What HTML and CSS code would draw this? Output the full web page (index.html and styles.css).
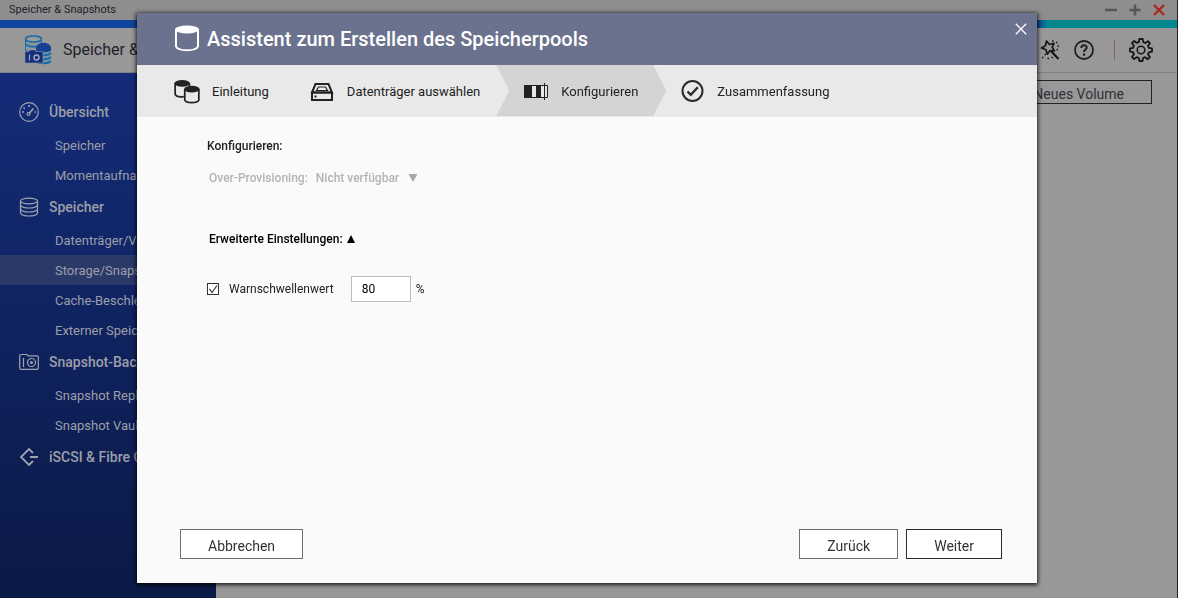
FILE: index.html
```html
<!DOCTYPE html>
<html lang="de">
<head>
<meta charset="utf-8">
<meta name="viewport" content="width=device-width, initial-scale=1">
<title>Speicher &amp; Snapshots</title>
<link rel="stylesheet" href="styles.css">
</head>
<body>
<div class="window">
  <div class="titlebar">
    <span class="titlebar-text">Speicher &amp; Snapshots</span>
    <div class="window-controls">
      <button class="icon-button" aria-label="Minimieren"><svg width="12" height="12" viewBox="0 0 12 12"><path d="M0 6h12" stroke="#55565c" stroke-width="2.500"/></svg></button>
      <button class="icon-button" aria-label="Maximieren"><svg width="12" height="12" viewBox="0 0 12 12"><path d="M.5 6h11M6 .5v11" stroke="#55565c" stroke-width="2.500"/></svg></button>
      <button class="icon-button" aria-label="Schließen"><svg width="12" height="12" viewBox="0 0 12 12"><path d="M1 1l10 10M11 1L1 11" stroke="#a9281f" stroke-width="2.400"/></svg></button>
    </div>
  </div>
  <div class="accent"></div>
  <header class="app-header">
    <svg class="app-logo" width="28" height="30" viewBox="0 0 28 30">
      <path d="M1.500 4v12h16V4" fill="#929899" stroke="#1c6cae"/>
      <path d="M1.500 9c2 3.500 14 3.500 16 0" fill="none" stroke="#1b72b4" stroke-width="2"/>
      <ellipse cx="9.500" cy="4" rx="8" ry="3" fill="#979c9e" stroke="#1769a8" stroke-width="1.500"/>
      <path d="M12 11v14.500c3 3.500 12 3.500 15 0V11z" fill="#7c97ad"/>
      <path d="M12 18c3 3 12 3 15 0M12 22c3 3 12 3 15 0M12 26c3 3 12 3 15 0" fill="none" stroke="#1769a8" stroke-width="1.800"/>
      <path d="M12 12c3-6 13-5 15 0v3.500c-3 2.500-12 2.500-15 0z" fill="#163f96"/>
      <path d="M1 16.500h4l1-1.500h5l1 1.500h7V28H1z" fill="#152f80" stroke="#8f959c" stroke-width=".6"/>
      <path d="M5.500 19.500v6" stroke="#a5a9b5" stroke-width="1.200"/>
      <circle cx="12.500" cy="22.500" r="2.500" fill="none" stroke="#a5a9b5" stroke-width="1.400"/>
    </svg>
    <h1 class="app-title">Speicher &amp; Snapshots</h1>
    <div class="header-tools">
      <button class="icon-button" aria-label="Assistent"><svg width="20" height="20" viewBox="0 0 20 20" fill="none" stroke="#161616"><path d="M6.500 1l3 3.500 4.500-1.200-1.800 4 2.200 3.700-4.400-.5-2.700 3.700-1.300-4.400L1.500 8l4-2.300z" stroke-width="1.700" stroke-linejoin="round"/><path d="M11 11l7.500 8" stroke-width="2.200"/><path d="M12 1h1.500M16 2.500h1.500M17.500 6H19M16.500 9.500H18M2 17.500h1.500M4.500 14.500H6M7.500 18.500H9M11.500 17.500H13" stroke-width="1.400"/></svg></button>
      <button class="icon-button" aria-label="Hilfe"><svg width="20" height="20" viewBox="0 0 20 20" fill="none" stroke="#202020"><circle cx="10" cy="10" r="9" stroke-width="1.800"/><path d="M7.300 8c0-3.800 5.600-3.600 5.400-.4-.1 1.900-2.700 2-2.700 4.400" stroke-width="2"/><path d="M10 13.500v2.200" stroke-width="2.200"/></svg></button>
      <span class="tool-divider"></span>
      <button class="icon-button" aria-label="Einstellungen"><svg width="24" height="24" viewBox="0 0 24 24" fill="none" stroke="#161616" stroke-width="1.800" stroke-linejoin="round"><path d="M10.300 1h3.400l.6 3.200 2 .8L19 3.200 21 5.300l-2 2.600.8 2 3.200.5v3.300l-3.200.6-.8 2 1.900 2.700-2.200 2.200-2.600-2-2 .8-.6 3h-3.200L9.800 20l-2-.8-2.700 1.900L3 18.900l1.900-2.700-.8-2L1 13.600v-3.200l3.100-.6.8-2L3 5.200 5.200 3l2.600 1.900 2-.8z"/><circle cx="12" cy="12" r="3.800" stroke-width="1.500"/></svg></button>
    </div>
  </header>
  <div class="workspace">
    <nav class="sidebar">
      <a class="nav-group" href="#"><svg width="20" height="20" viewBox="0 0 20 20" fill="none" stroke="#9ea3ae" stroke-width="1.200"><circle cx="10" cy="10" r="9.300"/><path d="M10 11.500l4.500-5" stroke-width="1.800"/><circle cx="9.500" cy="12" r="1.500"/><path d="M3 10h2M4.500 5.500l1.300 1.300M10 3v2M15.500 10H17" stroke-width="1.600"/></svg>Übersicht</a>
      <a class="nav-item" href="#">Speicher</a>
      <a class="nav-item" href="#">Momentaufnahme</a>
      <a class="nav-group" href="#"><svg width="20" height="20" viewBox="0 0 20 20" fill="none" stroke="#9ea3ae" stroke-width="1.200"><ellipse cx="10" cy="4" rx="8.500" ry="2.800"/><path d="M1.500 4v12c1.500 4 15.500 4 17 0V4M1.500 8c1.500 4 15.500 4 17 0M1.500 12c1.500 4 15.500 4 17 0"/></svg>Speicher</a>
      <a class="nav-item" href="#">Datenträger/VJBOD</a>
      <a class="nav-item nav-item-active" href="#">Storage/Snapshots</a>
      <a class="nav-item" href="#">Cache-Beschleunigung</a>
      <a class="nav-item" href="#">Externer Speicher</a>
      <a class="nav-group" href="#"><svg width="20" height="20" viewBox="0 0 20 20" fill="none" stroke="#9ea3ae" stroke-width="1.200"><path d="M2 2.500h6l1 1.300h9q1.300 0 1.300 1.300v11q0 1.300-1.300 1.300H2Q.7 17.400.7 16.100V3.800Q.7 2.500 2 2.500z"/><path d="M4.500 6v9"/><circle cx="12.500" cy="10.500" r="4"/><circle cx="12.500" cy="10.500" r="1.500" fill="#9ea3ae" stroke="none"/></svg>Snapshot-Backup</a>
      <a class="nav-item" href="#">Snapshot Replica</a>
      <a class="nav-item" href="#">Snapshot Vault</a>
      <a class="nav-group" href="#"><svg width="20" height="20" viewBox="0 0 20 20" fill="none" stroke="#9ea3ae" stroke-width="1.800"><path d="M14 6l-4-4-8 8 8 8 4-4M11 10h8"/></svg>iSCSI &amp; Fibre Channel</a>
    </nav>
    <main class="content">
      <button class="new-volume">Neues Volume</button>
    </main>
  </div>
</div>

<div class="overlay">
  <section class="dialog" role="dialog" aria-labelledby="dialog-title">
    <header class="dialog-header">
      <svg width="26" height="28" viewBox="0 0 26 28"><path d="M2 4.500V21.500c2 5 20 5 22 0V4.500" fill="none" stroke="#fff" stroke-width="2"/><ellipse cx="13" cy="4.500" rx="12" ry="4" fill="#fff"/></svg>
      <h2 class="dialog-title" id="dialog-title">Assistent zum Erstellen des Speicherpools</h2>
      <button class="icon-button dialog-close" aria-label="Schließen"><svg width="12" height="12" viewBox="0 0 12 12"><path d="M.8.800l10.400 10.400M11.200.800L.8 11.200" stroke="#fff" stroke-width="1.300"/></svg></button>
    </header>
    <ol class="steps">
      <li class="step step-intro"><svg width="26" height="26" viewBox="0 0 27 26" fill="none" stroke="#222" stroke-width="1.800"><path d="M1.200 4v11.500c1 2 5 2.800 9 2.200M16 4v3"/><ellipse cx="8.500" cy="4" rx="8" ry="3.500" fill="#222" stroke="none"/><path d="M11.200 10v11.500c1.500 3.500 13 3.500 14.600 0V10"/><ellipse cx="18.500" cy="10" rx="8" ry="3.500" fill="#222" stroke="none"/></svg>Einleitung</li>
      <li class="step step-disks"><svg width="24" height="20" viewBox="0 0 24 20" fill="none" stroke="#222" stroke-width="2"><path d="M2 10.500L5.500 2h13L22 10.500z"/><path d="M2 10.500h20V18H2z"/><path d="M8.500 5h7l2 3.500h-11z" stroke-width="1.200"/><path d="M4.500 14.500h2"/></svg>Datenträger auswählen</li>
      <li class="step step-current" aria-current="step"><svg width="25" height="18" viewBox="0 0 25 18"><path d="M.5 2.500h23v12H.5z" fill="#e6e6e6" stroke="#222"/><path d="M0 2h8v13H0zM12 2h5v13h-5z" fill="#222"/><path d="M20.500 0v17" stroke="#222"/></svg>Konfigurieren</li>
      <li class="step step-summary"><svg width="24" height="24" viewBox="0 0 24 24" fill="none" stroke="#2a2a2a" stroke-width="2"><circle cx="11.500" cy="11" r="10"/><path d="M6.500 11.500l3.300 3.300 7-7.500" stroke-width="2.400"/></svg>Zusammenfassung</li>
    </ol>
    <form class="dialog-body" onsubmit="return false">
      <h3 class="section-title">Konfigurieren:</h3>
      <div class="provisioning">
        <label for="provisioning">Over-Provisioning:</label>
        <select class="plain-select" id="provisioning" disabled><option>Nicht verfügbar</option></select>
        <svg width="10" height="8" viewBox="0 0 10 8"><path d="M.5 0h9L5 8z" fill="#a9a9a9"/></svg>
      </div>
      <button class="advanced" type="button" aria-expanded="true">Erweiterte Einstellungen:<svg width="8" height="8" viewBox="0 0 8 8"><path d="M0 8h8L4 0z" fill="#000"/></svg></button>
      <div class="threshold">
        <span class="check"><input class="check-box" id="warn" type="checkbox" checked><svg class="check-mark" width="12" height="12" viewBox="0 0 12 12"><path d="M2.500 6l2.500 3.500L10 2.500" fill="none" stroke="#333" stroke-width="1.200"/></svg></span>
        <label class="check-label" for="warn">Warnschwellenwert</label>
        <input class="number" type="text" value="80" aria-label="Warnschwellenwert in Prozent">
        <span>%</span>
      </div>
    </form>
    <footer class="dialog-footer">
      <button class="btn btn-cancel">Abbrechen</button>
      <button class="btn">Zurück</button>
      <button class="btn btn-primary">Weiter</button>
    </footer>
  </section>
</div>
</body>
</html>
```
FILE: styles.css
```css
* {
  box-sizing: border-box;
}

body {
  margin: 0;
  color: #222;
  font: 13px/20px Roboto, "Liberation Sans", sans-serif;
}

h1, h2, h3, ol {
  margin: 0;
  padding: 0;
}

button, input, select {
  color: inherit;
  font: inherit;
}

svg {
  display: block;
  flex: none;
}

.icon-button {
  padding: 0;
  border: 0;
  background: none;
}

.window {
  display: flex;
  flex-direction: column;
  min-height: 100vh;
  overflow: hidden;
  border-right: 1px solid #222;
  background: #989898;
}

.titlebar {
  display: flex;
  align-items: center;
  justify-content: space-between;
  height: 20px;
  padding: 0 12px 0 9px;
  background: #8e8e8e;
}

.titlebar-text {
  color: #20222a;
  font-size: 11px;
  line-height: 18px;
}

.window-controls {
  display: flex;
  gap: 12px;
}

.accent {
  height: 8px;
  background: linear-gradient(90deg, #0f46a0, #10399a 88%, #00868f 89%);
}

.app-header {
  display: flex;
  align-items: center;
  height: 45px;
  padding: 0 24px;
  border-bottom: 1px solid #808080;
}

.app-title {
  margin-left: 11px;
  color: #20222a;
  font-size: 16px;
  font-weight: 400;
}

.header-tools {
  display: flex;
  align-items: center;
  gap: 14px;
  margin-left: auto;
}

.tool-divider {
  width: 1px;
  height: 20px;
  margin-left: 6px;
  background: #886468;
}

.workspace {
  display: flex;
  flex: 1;
}

.sidebar {
  flex: none;
  width: 216px;
  padding-top: 22px;
  background: linear-gradient(#142c79, #0b1945);
}

.nav-group, .nav-item {
  display: flex;
  align-items: center;
  color: #9c9fa8;
  white-space: nowrap;
  text-decoration: none;
}

.nav-group {
  gap: 10px;
  height: 33px;
  margin-bottom: 2px;
  padding-left: 19px;
  font-size: 14px;
  font-weight: 500;
}

.nav-item {
  height: 30px;
  padding: 1px 0 0 55px;
}

.nav-item-active {
  background: #2b3969;
}

.content {
  flex: 1;
  padding: 7px 25px;
}

.new-volume {
  display: block;
  height: 24px;
  margin-left: auto;
  padding: 3px 27px 0;
  border: 1px solid #222;
  background: none;
  color: #30323a;
  font-size: 14px;
}

.overlay {
  position: fixed;
  inset: 0;
  display: flex;
  padding: 13px 141px 15px 137px;
}

.dialog {
  display: flex;
  flex: 1;
  flex-direction: column;
  background: #fafafa;
  box-shadow: 0 1px 4px 1px rgba(0, 0, 0, 0.8);
}

.dialog-header {
  display: flex;
  align-items: center;
  gap: 7px;
  height: 52px;
  padding: 0 10px 0 37px;
  background: #6b728e;
  color: #fff;
}

.dialog-title {
  font-size: 20px;
  font-weight: 500;
}

.dialog-close {
  align-self: flex-start;
  margin: 10px 0 0 auto;
}

.steps {
  display: flex;
  height: 52px;
  padding-left: 37px;
  background: #e9e9e9;
  list-style: none;
}

.step {
  display: flex;
  align-items: center;
  gap: 12px;
  padding-top: 1px;
}

.step-disks {
  gap: 13px;
  margin-left: 41px;
}

.step-current {
  height: 51px;
  margin: 0 15px 0 16px;
  padding: 2px 28px 0;
  background: #d4d4d4;
  clip-path: polygon(0 0, calc(100% - 13px) 0, 100% 50%, calc(100% - 13px) 100%, 0 100%, 13px 50%);
}

.dialog-body {
  display: flex;
  flex: 1;
  flex-direction: column;
  align-items: flex-start;
  padding: 19px 70px;
  font-size: 12px;
}

.section-title {
  font-size: 12px;
  font-weight: 500;
}

.provisioning {
  display: flex;
  align-items: center;
  gap: 8px;
  margin-top: 12px;
  padding-left: 2px;
  color: #b3b3b3;
  font-weight: 500;
}

.plain-select {
  height: 20px;
  padding: 0;
  border: 0;
  background: none;
  opacity: 1;
  appearance: none;
}

.advanced {
  display: flex;
  align-items: center;
  gap: 4px;
  margin-top: 41px;
  padding: 0 2px;
  border: 0;
  background: none;
  color: #000;
  font-weight: 500;
}

.threshold {
  display: flex;
  align-items: center;
  margin-top: 27px;
}

.check {
  display: grid;
}

.check-box, .check-mark {
  grid-area: 1 / 1;
}

.check-box {
  width: 12px;
  height: 12px;
  margin: 0;
  border: 1px solid #333;
  background: #fff;
  appearance: none;
}

.check-mark {
  z-index: 1;
  pointer-events: none;
}

.check-label {
  margin: 0 17px 0 10px;
}

.number {
  width: 60px;
  height: 26px;
  margin-right: 5px;
  padding: 0 10px;
  border: 1px solid #b7bdc9;
  background: #fff;
  color: #000;
}

.dialog-footer {
  display: flex;
  gap: 8px;
  padding: 0 35px 24px 43px;
}

.btn {
  height: 30px;
  padding: 3px 27px 0;
  border: 1px solid #707070;
  background: #fff;
  color: #333;
  font-size: 14px;
}

.btn-cancel {
  margin-right: auto;
}

.btn-primary {
  border-color: #2b2b2b;
}
```
